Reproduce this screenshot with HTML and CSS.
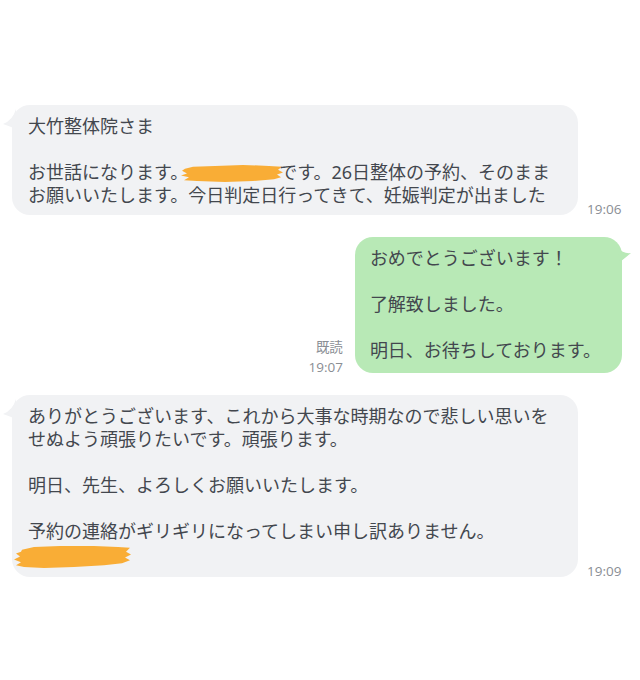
FILE: index.html
```html
<!DOCTYPE html>
<html lang="ja">
<head>
    <meta charset="utf-8">
    <meta name="viewport" content="width=device-width,initial-scale=1.0">
    <title>トーク</title>
    <link rel="stylesheet" href="styles.css">
</head>
<body>
<div class="chat">
    <div class="row row-in">
        <div class="bubble bubble-in">
            <svg class="tail tail-in" viewBox="0 0 14 20"><path d="M14 0 Q11 11 1 15 Q7 17 14 20 Z"/></svg>
            <p>大竹整体院さま</p>
            <p>&nbsp;</p>
            <p>お世話になります。<span class="redact redact-name"><svg viewBox="0 0 102 20" preserveAspectRatio="none"><path d="M4 5 L12 3 L34 2 L62 1 L88 2 L101 3 L97 6 L102 9 L96 11 L100 14 L93 16 L72 18 L44 19 L16 18 L3 17 L8 14 L0 12 L6 10 L1 7 Z"/></svg></span>です。26日整体の予約、そのまま</p>
            <p>お願いいたします。今日判定日行ってきて、妊娠判定が出ました</p>
        </div>
        <div class="meta"><span>19:06</span></div>
    </div>

    <div class="row row-out">
        <div class="meta"><span>既読</span><span>19:07</span></div>
        <div class="bubble bubble-out">
            <svg class="tail tail-out" viewBox="0 0 14 14"><path d="M0 0 Q5 6 13 5 Q7 10 2 14 Z"/></svg>
            <p>おめでとうございます！</p>
            <p>&nbsp;</p>
            <p>了解致しました。</p>
            <p>&nbsp;</p>
            <p>明日、お待ちしております。</p>
        </div>
    </div>

    <div class="row row-in">
        <div class="bubble bubble-in">
            <svg class="tail tail-in" viewBox="0 0 14 20"><path d="M14 0 Q11 11 1 15 Q7 17 14 20 Z"/></svg>
            <p>ありがとうございます、これから大事な時期なので悲しい思いを</p>
            <p>せぬよう頑張りたいです。頑張ります。</p>
            <p>&nbsp;</p>
            <p>明日、先生、よろしくお願いいたします。</p>
            <p>&nbsp;</p>
            <p>予約の連絡がギリギリになってしまい申し訳ありません。</p>
            <p><span class="redact redact-sign"><svg viewBox="0 0 118 26" preserveAspectRatio="none"><path d="M8 6 L20 3 L46 2 L80 2 L104 3 L116 4 L112 8 L117 11 L111 14 L116 17 L108 20 L90 22 L60 24 L30 25 L10 24 L2 22 L7 19 L0 16 L6 13 L2 10 L7 8 Z"/></svg></span></p>
        </div>
        <div class="meta"><span>19:09</span></div>
    </div>
</div>
</body>
</html>
```

FILE: styles.css
```css
* {
    margin: 0;
    padding: 0;
    box-sizing: border-box;
}

body {
    background-color: #fff;
    font-family: "Noto Sans", "Noto Sans CJK JP", sans-serif;
    color: #43474e;
}

.chat {
    display: flex;
    flex-direction: column;
    gap: 22px;
    padding: 105px 18px 0 12px;
}

.row {
    display: flex;
    align-items: flex-end;
    gap: 9px;
}

.row-out {
    justify-content: flex-end;
    gap: 12px;
}

.bubble {
    position: relative;
    border-radius: 18px;
    padding: 10px 18px 8px 16px;
    font-size: 18px;
    line-height: 23px;
    white-space: nowrap;
}

.bubble-in {
    width: 566px;
    background-color: #f1f2f4;
}

.bubble-out {
    padding: 10px 21px 11px 15px;
    background-color: #b8e9b6;
}

.tail {
    position: absolute;
    width: 14px;
}

.tail-in {
    left: -10px;
    top: 4px;
    height: 20px;
    fill: #f1f2f4;
}

.tail-out {
    right: -10px;
    top: 11px;
    height: 14px;
    fill: #b8e9b6;
}

.meta {
    display: flex;
    flex-direction: column;
    align-items: flex-end;
    margin-bottom: -4px;
    font-family: "Open Sans", "Noto Sans CJK JP", sans-serif;
    font-size: 13.5px;
    line-height: 20px;
    color: #8a8e94;
}

.redact {
    display: inline-block;
    vertical-align: middle;
}

.redact svg {
    display: block;
    width: 100%;
    height: 100%;
    fill: #f9ad36;
}

.redact-name {
    width: 102px;
    height: 19px;
    margin: -2px -4px 0 -7px;
}

.redact-sign {
    width: 118px;
    height: 25px;
    margin-left: -14px;
}
```
